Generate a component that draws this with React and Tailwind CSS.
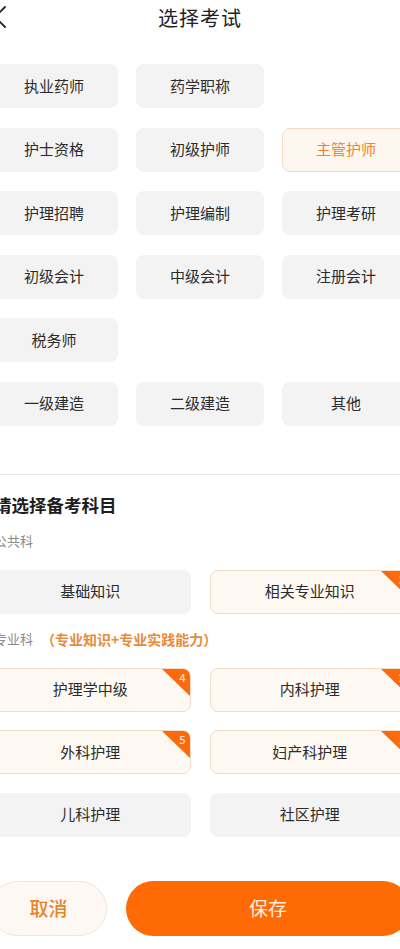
const exams = [
  ['执业药师', '药学职称', null],
  ['护士资格', '初级护师', '主管护师'],
  ['护理招聘', '护理编制', '护理考研'],
  ['初级会计', '中级会计', '注册会计'],
  ['税务师', null, null],
  ['一级建造', '二级建造', '其他'],
];

const publicSubjects = [
  { name: '基础知识' },
  { name: '相关专业知识', badge: '3' },
];

const proSubjects = [
  { name: '护理学中级', badge: '4' },
  { name: '内科护理', badge: '2' },
  { name: '外科护理', badge: '5' },
  { name: '妇产科护理', badge: '1' },
  { name: '儿科护理' },
  { name: '社区护理' },
];

function ExamChip({ label, active }) {
  if (!label) return <div />;
  return (
    <div
      className={
        active
          ? 'h-[44px] rounded-lg border border-[#f6dcc3] bg-[#fef7ef] flex items-center justify-center text-[15px] text-[#ec8430]'
          : 'h-[44px] rounded-lg bg-[#f3f3f3] flex items-center justify-center text-[15px] text-[#2b2b2b]'
      }
    >
      {label}
    </div>
  );
}

function SubjectChip({ name, badge }) {
  const active = !!badge;
  return (
    <div
      className={
        active
          ? 'relative overflow-hidden h-[44px] rounded-lg border border-[#f3dcc7] bg-[#fdf8f2] flex items-center justify-center text-[15px] text-[#2b2b2b]'
          : 'relative overflow-hidden h-[44px] rounded-lg bg-[#f3f3f3] flex items-center justify-center text-[15px] text-[#2b2b2b]'
      }
    >
      {name}
      {active && (
        <div className="absolute top-0 right-0 w-[28px] h-[27px]">
          <svg width="28" height="27" viewBox="0 0 28 27" className="absolute inset-0">
            <polygon points="0,0 28,0 28,27" fill="#fb6a0c" />
          </svg>
          <span className="absolute top-[1px] right-[4px] text-[11px] leading-[14px] font-medium text-[#ffe6d0]">{badge}</span>
        </div>
      )}
    </div>
  );
}

export default function App() {
  return (
    <div className="w-[400px] h-[949px] overflow-hidden bg-white font-['Noto_Sans_CJK_SC','Noto_Sans',sans-serif]">
      <div className="w-[420px] -ml-[10px]">
        {/* header */}
        <div className="relative h-[35px] flex items-center justify-center">
          <svg
            width="16"
            height="22"
            viewBox="0 0 16 22"
            className="absolute left-[3px] top-[6px]"
            fill="none"
            stroke="#222"
            strokeWidth="1.8"
            strokeLinecap="round"
            strokeLinejoin="round"
          >
            <polyline points="12,1 2,11 12,21" />
          </svg>
          <h1 className="text-[20px] font-normal text-[#222] tracking-[1px]">选择考试</h1>
        </div>

        {/* exam grid */}
        <div className="mt-[29px] grid grid-cols-3 gap-x-[18px] gap-y-[19.5px]">
          {exams.flatMap((row, r) =>
            row.map((label, c) => (
              <ExamChip key={r + '-' + c} label={label} active={label === '主管护师'} />
            ))
          )}
        </div>

        <div className="mt-[48px] border-t border-[#e6e6e6]" />

        {/* subjects */}
        <h2 className="mt-[18px] pl-[4px] text-[17.5px] leading-[24px] font-bold text-[#1e1e1e]">请选择备考科目</h2>
        <p className="mt-[15px] pl-[4px] text-[13px] leading-[18px] text-[#8a8a8a]">公共科</p>

        <div className="mt-[20px] grid grid-cols-2 gap-x-[19px]">
          {publicSubjects.map((s) => (
            <SubjectChip key={s.name} {...s} />
          ))}
        </div>

        <p className="mt-[16px] pl-[4px] text-[13px] leading-[18px] text-[#8a8a8a] flex items-center">
          专业科
          <span className="ml-[8px] text-[14px] font-semibold text-[#ea8a3a]">（专业知识+专业实践能力）</span>
        </p>

        <div className="mt-[20px] grid grid-cols-2 gap-x-[19px] gap-y-[18.5px]">
          {proSubjects.map((s) => (
            <SubjectChip key={s.name} {...s} />
          ))}
        </div>

        {/* footer buttons */}
        <div className="mt-[44px] flex gap-[19px]">
          <button className="w-[117px] h-[55px] rounded-full border border-[#f4e3d3] bg-[#fdf8f4] text-[19px] font-medium text-[#e8832a]">
            取消
          </button>
          <button className="flex-1 h-[55px] rounded-full bg-[#fe6a04] text-[19px] text-[#fff0e2]">
            保存
          </button>
        </div>
      </div>
    </div>
  );
}
